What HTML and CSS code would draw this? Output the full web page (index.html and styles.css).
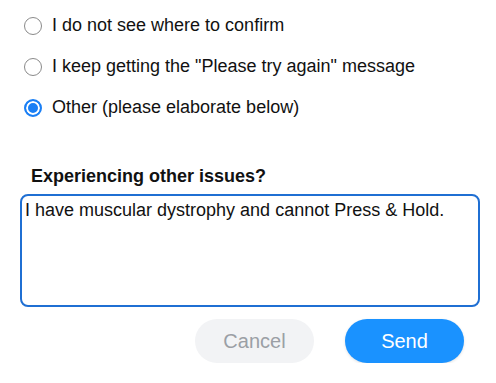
FILE: index.html
```html
<!DOCTYPE html>
<html lang="en">
<head>
    <meta charset="UTF-8">
    <meta name="viewport" content="width=device-width, initial-scale=1.0">
    <title>Report an issue</title>
    <link rel="stylesheet" href="styles.css">
</head>
<body>
    <form class="issue-form">
        <div class="options">
            <label class="option">
                <input type="radio" name="issue" value="confirm">
                <span>I do not see where to confirm</span>
            </label>
            <label class="option">
                <input type="radio" name="issue" value="retry">
                <span>I keep getting the "Please try again" message</span>
            </label>
            <label class="option">
                <input type="radio" name="issue" value="other" checked>
                <span>Other (please elaborate below)</span>
            </label>
        </div>

        <label class="details-label" for="details">Experiencing other issues?</label>
        <textarea id="details" class="details">I have muscular dystrophy and cannot Press &amp; Hold.</textarea>

        <div class="actions">
            <button type="button" class="btn btn-cancel">Cancel</button>
            <button type="button" class="btn btn-send">Send</button>
        </div>
    </form>
</body>
</html>
```

FILE: styles.css
```css
body {
    font-family: "Liberation Sans", Arial, Helvetica, sans-serif;
    margin: 0;
    padding: 0;
    background: #fff;
    color: #111;
}
.issue-form {
    padding: 5px 16px 0 20px;
}
.options {
    display: flex;
    flex-direction: column;
}
.option {
    display: flex;
    align-items: center;
    height: 41px;
    padding-left: 4px;
    font-size: 18px;
    cursor: pointer;
}
.option input {
    appearance: none;
    -webkit-appearance: none;
    width: 18px;
    height: 18px;
    margin: 0 10px 0 0;
    border: 1px solid #8a8a8a;
    border-radius: 50%;
    background: #fff;
    box-sizing: border-box;
}
.option input:checked {
    border: 2px solid #1a7ff5;
    box-shadow: inset 0 0 0 2px #fff;
    background: #1a7ff5;
}
.details-label {
    display: block;
    margin: 38px 0 7px 11px;
    font-size: 18px;
    font-weight: bold;
}
.details {
    display: block;
    width: 100%;
    height: 113px;
    box-sizing: border-box;
    border: 2px solid #1f6fd3;
    border-radius: 8px;
    padding: 4px 3px;
    font-family: inherit;
    font-size: 18px;
    color: #111;
    resize: none;
    outline: none;
}
.actions {
    display: flex;
    justify-content: flex-end;
    gap: 31px;
    padding: 12px 16px 0 0;
}
.btn {
    width: 119px;
    height: 44px;
    border: none;
    border-radius: 22px;
    font-family: inherit;
    font-size: 20px;
}
.btn-cancel {
    background: #f2f3f5;
    color: #9b9fa5;
}
.btn-send {
    background: #1a92ff;
    color: #fff;
    box-shadow: 0 1px 3px rgba(0, 0, 0, 0.12);
}
```
